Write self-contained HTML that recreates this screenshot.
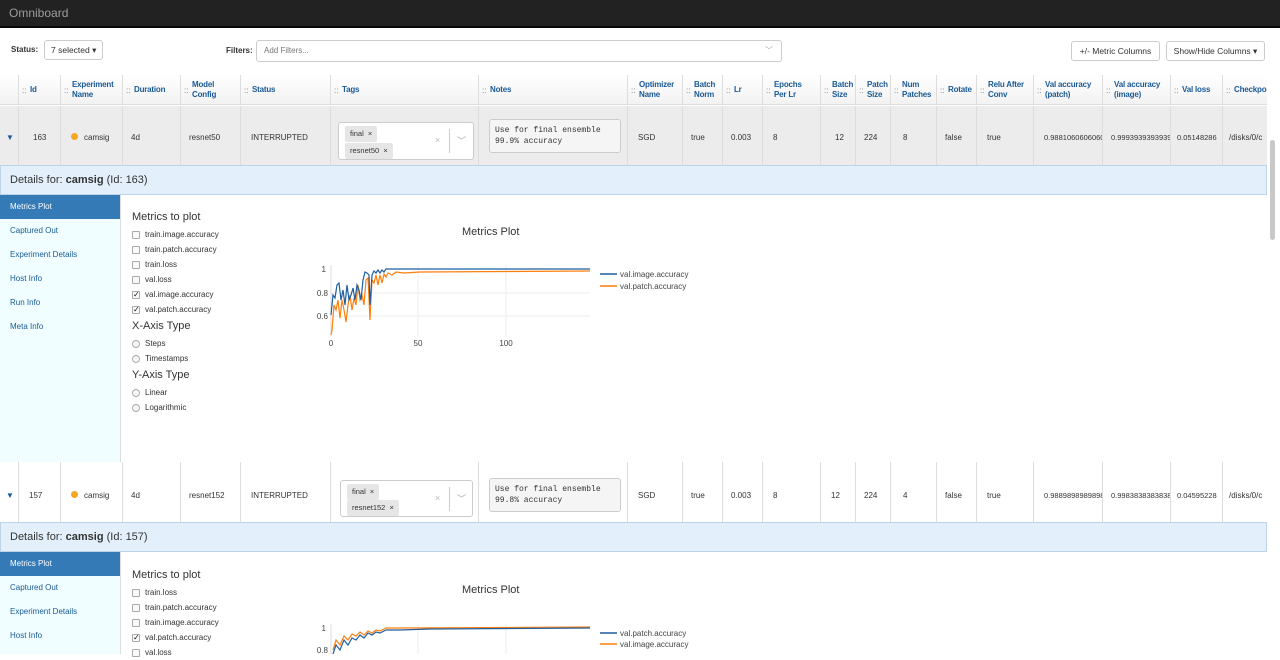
<!DOCTYPE html>
<html><head><meta charset="utf-8"><style>
*{box-sizing:border-box;margin:0;padding:0}
body{width:1280px;height:654px;overflow:hidden;background:#fff;font-family:"Liberation Sans",Arial,sans-serif;font-size:9px;color:#333;position:relative}
.a{position:absolute}
.nav{top:0;left:0;width:1280px;height:28px;background:#222;border-bottom:2px solid #080808}
.nav span{position:absolute;left:9px;top:6px;color:#9d9d9d;font-size:12px}
.btn{border:1px solid #ccc;border-radius:3px;background:#fff;font-size:8.5px;color:#333;padding:0 6px;line-height:18px;height:20px;white-space:nowrap}
.hd{top:75px;height:30px;width:1267px;background:linear-gradient(#fff,#f2f2f2);border-bottom:1px solid #ddd}
.hc{position:absolute;top:0;height:30px;border-left:1px solid #ddd;color:#1a5a96;font-weight:bold;font-size:8px;line-height:10px;white-space:nowrap;overflow:hidden}
.hc i{position:absolute;left:3px;top:11px;font-style:normal;color:#777;font-weight:normal}
.hc b{position:absolute;left:11px;top:5px;font-weight:bold;letter-spacing:-0.2px}
.hc b.one{top:10px}
.row{width:1267px;height:60px}
.cl{position:absolute;top:0;height:60px;border-left:1px solid #ddd;font-size:8px;padding-left:8px;white-space:nowrap;overflow:hidden}
.det{left:0;width:1267px;height:30px;background:#e3f0fb;border:1px solid #bcd3e8;font-size:11px;padding-left:9px;line-height:28px}
.side{left:0;width:121px;background:#f0feff;border-right:1px solid #ddd}
.side div{height:24px;line-height:24px;padding-left:10px;font-size:8px;color:#1a5a96}
.side div.act{background:#337ab7;color:#fff}
.tag{position:absolute;border:1px solid #ccc;border-radius:3px;width:144px;height:60px;left:338px;background:#fff}
.tg{position:absolute;left:6px;background:#e6e6e6;border-radius:2px;font-size:7.5px;padding:0 5px;height:16px;line-height:16px;color:#333}
.note{position:absolute;left:489px;width:132px;height:34px;border:1px solid #ccc;border-radius:3px;background:#f5f5f5;font-family:"Liberation Mono",monospace;font-size:8px;line-height:11px;padding:5px 5px}
.mt{font-size:11px;color:#333}
.ck{font-size:8px;height:15px;line-height:15px;padding-left:13px;position:relative}
.ck:before{content:"";position:absolute;left:0;top:4px;width:6px;height:6px;border:1px solid #aaa;border-radius:1px;background:#fafafa}
.rd:before{border-radius:50%}
.ck.on:after{content:"✓";position:absolute;left:1px;top:0;font-size:8px;color:#111}
.dot{display:inline-block;width:7px;height:7px;border-radius:50%;background:#f5a623;margin-right:6px}
#r1 .cl{line-height:64px}
#r2 .cl{line-height:68px}
</style></head><body>
<div class="a nav"><span>Omniboard</span></div>
<div class="a" style="left:11px;top:45px;font-weight:bold;font-size:8px">Status:</div>
<div class="a btn" style="left:44px;top:40px">7 selected ▾</div>
<div class="a" style="left:226px;top:46px;font-weight:bold;font-size:8px">Filters:</div>
<div class="a" style="left:256px;top:40px;width:526px;height:22px;border:1px solid #ccc;border-radius:3px;padding:0 7px;line-height:20px;color:#777;font-size:8px">Add Filters...<span style="position:absolute;right:8px;color:#aaa">﹀</span></div>
<div class="a btn" style="left:1071px;top:41px;width:89px;text-align:center;padding:0">+/- Metric Columns</div>
<div class="a btn" style="left:1166px;top:41px;width:99px;text-align:center;padding:0">Show/Hide Columns ▾</div>

<div class="a hd">
<div class="hc" style="left:0;width:18px;border-left:none"></div>
<div class="hc" style="left:18px;width:42px"><i>::</i><b class="one">Id</b></div>
<div class="hc" style="left:60px;width:62px"><i>::</i><b>Experiment<br>Name</b></div>
<div class="hc" style="left:122px;width:58px"><i>::</i><b class="one">Duration</b></div>
<div class="hc" style="left:180px;width:60px"><i>::</i><b>Model<br>Config</b></div>
<div class="hc" style="left:240px;width:90px"><i>::</i><b class="one">Status</b></div>
<div class="hc" style="left:330px;width:148px"><i>::</i><b class="one">Tags</b></div>
<div class="hc" style="left:478px;width:149px"><i>::</i><b class="one">Notes</b></div>
<div class="hc" style="left:627px;width:55px"><i>::</i><b>Optimizer<br>Name</b></div>
<div class="hc" style="left:682px;width:40px"><i>::</i><b>Batch<br>Norm</b></div>
<div class="hc" style="left:722px;width:40px"><i>::</i><b class="one">Lr</b></div>
<div class="hc" style="left:762px;width:58px"><i>::</i><b>Epochs<br>Per Lr</b></div>
<div class="hc" style="left:820px;width:35px"><i>::</i><b>Batch<br>Size</b></div>
<div class="hc" style="left:855px;width:35px"><i>::</i><b>Patch<br>Size</b></div>
<div class="hc" style="left:890px;width:46px"><i>::</i><b>Num<br>Patches</b></div>
<div class="hc" style="left:936px;width:40px"><i>::</i><b class="one">Rotate</b></div>
<div class="hc" style="left:976px;width:57px"><i>::</i><b>Relu After<br>Conv</b></div>
<div class="hc" style="left:1033px;width:69px"><i>::</i><b>Val accuracy<br>(patch)</b></div>
<div class="hc" style="left:1102px;width:68px"><i>::</i><b>Val accuracy<br>(image)</b></div>
<div class="hc" style="left:1170px;width:52px"><i>::</i><b class="one">Val loss</b></div>
<div class="hc" style="left:1222px;width:45px"><i>::</i><b class="one">Checkpo</b></div>
</div>

<!-- row 1 -->
<div class="a row" id="r1" style="top:106px;background:#ececec">
<div class="cl" style="left:0;border-left:none;color:#1a5a96;padding-left:6px">▼</div>
<div class="cl" style="left:18px;width:42px;padding-left:14px">163</div>
<div class="cl" style="left:60px;width:62px;padding-left:10px"><span class="dot"></span>camsig</div>
<div class="cl" style="left:122px;width:58px">4d</div>
<div class="cl" style="left:180px;width:60px">resnet50</div>
<div class="cl" style="left:240px;width:90px;padding-left:10px">INTERRUPTED</div>
<div class="cl" style="left:330px;width:148px"></div>
<div class="cl" style="left:478px;width:149px"></div>
<div class="cl" style="left:627px;width:55px;padding-left:10px">SGD</div>
<div class="cl" style="left:682px;width:40px">true</div>
<div class="cl" style="left:722px;width:40px">0.003</div>
<div class="cl" style="left:762px;width:58px;padding-left:10px">8</div>
<div class="cl" style="left:820px;width:35px;padding-left:14px">12</div>
<div class="cl" style="left:855px;width:35px">224</div>
<div class="cl" style="left:890px;width:46px;padding-left:12px">8</div>
<div class="cl" style="left:936px;width:40px">false</div>
<div class="cl" style="left:976px;width:57px;padding-left:10px">true</div>
<div class="cl" style="left:1033px;width:69px;padding-left:10px;font-size:7.5px">0.988106060606060</div>
<div class="cl" style="left:1102px;width:68px;padding-left:8px;font-size:7.5px">0.999393939393939</div>
<div class="cl" style="left:1170px;width:52px;padding-left:6px;font-size:7.5px">0.05148286</div>
<div class="cl" style="left:1222px;width:45px;padding-left:6px">/disks/0/c</div>
<div class="tag" style="top:16px;left:338px;height:38px;width:136px"><div class="tg" style="top:3px">final &nbsp;×</div><div class="tg" style="top:20px">resnet50 &nbsp;×</div><span style="position:absolute;left:96px;top:12px;color:#bbb">×</span><span style="position:absolute;left:110px;top:6px;height:24px;border-left:1px solid #ccc"></span><span style="position:absolute;left:118px;top:11px;color:#aaa">﹀</span></div>
<div class="note" style="top:13px">Use for final ensemble<br>99.9% accuracy</div>
</div>

<div class="a det" style="top:165px">Details for: <b>camsig</b> (Id: 163)</div>
<div class="a side" style="top:195px;height:267px"><div class="act">Metrics Plot</div><div>Captured Out</div><div>Experiment Details</div><div>Host Info</div><div>Run Info</div><div>Meta Info</div></div>
<div class="a" style="left:132px;top:211px">
<div class="mt" style="margin-bottom:4px">Metrics to plot</div>
<div class="ck">train.image.accuracy</div><div class="ck">train.patch.accuracy</div><div class="ck">train.loss</div><div class="ck">val.loss</div><div class="ck on">val.image.accuracy</div><div class="ck on">val.patch.accuracy</div>
<div class="mt" style="margin:3px 0 4px">X-Axis Type</div>
<div class="ck rd">Steps</div><div class="ck rd">Timestamps</div>
<div class="mt" style="margin:3px 0 4px">Y-Axis Type</div>
<div class="ck rd">Linear</div><div class="ck rd">Logarithmic</div>
</div>
<div class="a" style="left:462px;top:226px;font-size:11px">Metrics Plot</div>
<svg class="a" style="left:0;top:0" width="1280" height="654" font-family="Liberation Sans" font-size="8" fill="#444">
<g stroke="#eee" stroke-width="1"><line x1="331" y1="293" x2="590" y2="293"/><line x1="331" y1="316" x2="590" y2="316"/><line x1="418" y1="265" x2="418" y2="336"/><line x1="506" y1="265" x2="506" y2="336"/></g>
<line x1="331" y1="265" x2="331" y2="336" stroke="#ddd"/>
<text x="326" y="272" text-anchor="end">1</text><text x="328" y="296" text-anchor="end">0.8</text><text x="328" y="319" text-anchor="end">0.6</text>
<text x="331" y="346" text-anchor="middle">0</text><text x="418" y="346" text-anchor="middle">50</text><text x="506" y="346" text-anchor="middle">100</text>
<polyline fill="none" stroke="#ff7f0e" stroke-width="1.2" points="331,335 332,330 334,305 336,310 338,300 340,318 342,300 344,310 346,322 348,305 350,295 352,310 354,298 356,305 358,285 360,300 362,295 364,305 366,280 368,278 370,320 372,280 374,283 376,275 378,285 380,275 382,283 384,274 386,277 388,273 392,275 396,272 404,273 420,272 590,271"/>
<polyline fill="none" stroke="#1f5fa0" stroke-width="1.2" points="331,315 333,295 335,298 337,285 339,283 341,300 343,290 345,305 347,285 349,300 351,295 353,288 355,300 357,285 359,290 361,300 363,280 365,272 367,273 369,275 370,305 372,275 374,271 376,273 378,270 380,273 382,270 384,272 386,269 590,269"/>
<line x1="600" y1="274" x2="617" y2="274" stroke="#1f5fa0" stroke-width="1.5"/><text x="620" y="277">val.image.accuracy</text>
<line x1="600" y1="286" x2="617" y2="286" stroke="#ff7f0e" stroke-width="1.5"/><text x="620" y="289">val.patch.accuracy</text>

<line x1="331" y1="624" x2="331" y2="654" stroke="#ddd"/>
<line x1="418" y1="624" x2="418" y2="654" stroke="#eee"/><line x1="506" y1="624" x2="506" y2="654" stroke="#eee"/>
<text x="326" y="631" text-anchor="end">1</text><text x="328" y="653" text-anchor="end">0.8</text>
<polyline fill="none" stroke="#ff7f0e" stroke-width="1.2" points="333,650 336,640 340,645 344,636 348,640 352,634 356,636 360,632 364,635 368,631 372,633 376,630 380,631 386,628 400,628 590,627"/>
<polyline fill="none" stroke="#1f5fa0" stroke-width="1.2" points="333,654 336,645 340,650 344,640 348,645 352,638 356,640 360,635 364,638 368,633 372,635 376,632 380,633 386,630 400,630 430,629 590,628"/>
<line x1="600" y1="633" x2="617" y2="633" stroke="#1f5fa0" stroke-width="1.5"/><text x="620" y="636">val.patch.accuracy</text>
<line x1="600" y1="644" x2="617" y2="644" stroke="#ff7f0e" stroke-width="1.5"/><text x="620" y="647">val.image.accuracy</text>
</svg>

<!-- row 2 -->
<div class="a row" id="r2" style="top:462px;background:#fff">
<div class="cl" style="left:0;border-left:none;color:#1a5a96;padding-left:6px">▼</div>
<div class="cl" style="left:18px;width:42px;padding-left:10px">157</div>
<div class="cl" style="left:60px;width:62px;padding-left:10px"><span class="dot"></span>camsig</div>
<div class="cl" style="left:122px;width:58px">4d</div>
<div class="cl" style="left:180px;width:60px">resnet152</div>
<div class="cl" style="left:240px;width:90px;padding-left:10px">INTERRUPTED</div>
<div class="cl" style="left:330px;width:148px"></div>
<div class="cl" style="left:478px;width:149px"></div>
<div class="cl" style="left:627px;width:55px;padding-left:10px">SGD</div>
<div class="cl" style="left:682px;width:40px">true</div>
<div class="cl" style="left:722px;width:40px">0.003</div>
<div class="cl" style="left:762px;width:58px;padding-left:10px">8</div>
<div class="cl" style="left:820px;width:35px;padding-left:10px">12</div>
<div class="cl" style="left:855px;width:35px">224</div>
<div class="cl" style="left:890px;width:46px;padding-left:12px">4</div>
<div class="cl" style="left:936px;width:40px">false</div>
<div class="cl" style="left:976px;width:57px;padding-left:10px">true</div>
<div class="cl" style="left:1033px;width:69px;padding-left:10px;font-size:7.5px">0.988989898989899</div>
<div class="cl" style="left:1102px;width:68px;padding-left:8px;font-size:7.5px">0.998383838383838</div>
<div class="cl" style="left:1170px;width:52px;padding-left:6px;font-size:7.5px">0.04595228</div>
<div class="cl" style="left:1222px;width:45px;padding-left:6px">/disks/0/c</div>
<div class="tag" style="top:18px;left:340px;height:37px;width:133px"><div class="tg" style="top:3px">final &nbsp;×</div><div class="tg" style="top:19px">resnet152 &nbsp;×</div><span style="position:absolute;left:94px;top:12px;color:#bbb">×</span><span style="position:absolute;left:108px;top:6px;height:24px;border-left:1px solid #ccc"></span><span style="position:absolute;left:116px;top:11px;color:#aaa">﹀</span></div>
<div class="note" style="top:16px">Use for final ensemble<br>99.8% accuracy</div>
</div>

<div class="a det" style="top:522px">Details for: <b>camsig</b> (Id: 157)</div>
<div class="a side" style="top:552px;height:102px"><div class="act">Metrics Plot</div><div>Captured Out</div><div>Experiment Details</div><div>Host Info</div></div>
<div class="a" style="left:132px;top:569px">
<div class="mt" style="margin-bottom:4px">Metrics to plot</div>
<div class="ck">train.loss</div><div class="ck">train.patch.accuracy</div><div class="ck">train.image.accuracy</div><div class="ck on">val.patch.accuracy</div><div class="ck">val.loss</div>
</div>
<div class="a" style="left:462px;top:584px;font-size:11px">Metrics Plot</div>
<div class="a" style="left:1270px;top:140px;width:5px;height:100px;background:#c8c8c8;border-radius:3px"></div>
</body></html>
